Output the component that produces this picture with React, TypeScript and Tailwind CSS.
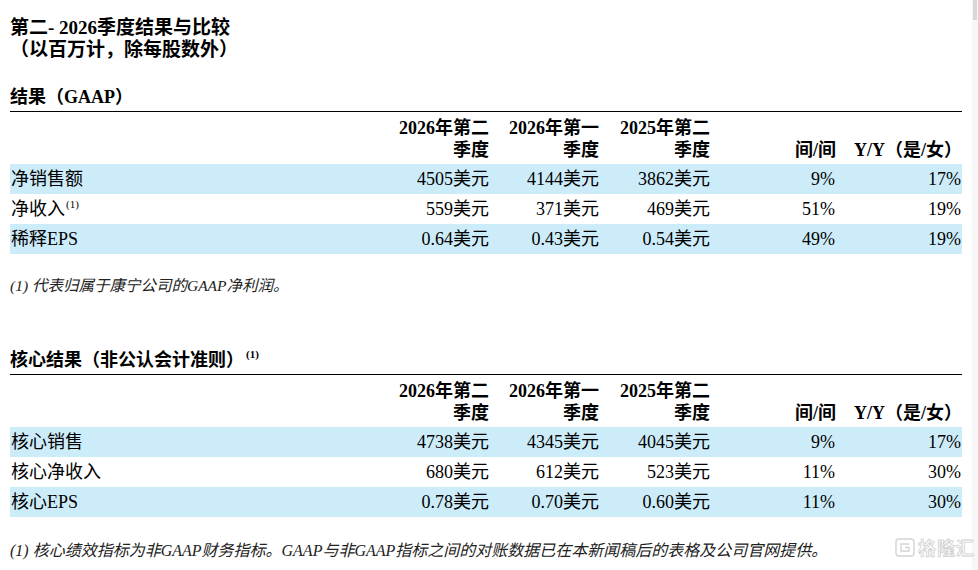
import React from 'react';

type Row = {
  label: string;
  sup?: string;
  values: string[];
};

const serif = "font-['Liberation_Serif','Noto_Sans_CJK_SC',serif]";

const gaapRows: Row[] = [
  { label: '净销售额', values: ['4505美元', '4144美元', '3862美元', '9%', '17%'] },
  { label: '净收入', sup: '(1)', values: ['559美元', '371美元', '469美元', '51%', '19%'] },
  { label: '稀释EPS', values: ['0.64美元', '0.43美元', '0.54美元', '49%', '19%'] },
];

const coreRows: Row[] = [
  { label: '核心销售', values: ['4738美元', '4345美元', '4045美元', '9%', '17%'] },
  { label: '核心净收入', values: ['680美元', '612美元', '523美元', '11%', '30%'] },
  { label: '核心EPS', values: ['0.78美元', '0.70美元', '0.60美元', '11%', '30%'] },
];

// 列宽：标签 | 三个季度 | 间/间 | Y/Y
const cols = 'grid grid-cols-[1fr_110px_110px_111px_124px_126px]';

const HeaderRow = () => (
  <div className={`${cols} h-[52px] items-end pb-[3px] font-bold text-[18px] leading-[22px]`}>
    <div />
    <div className="text-right pr-[2px]">2026年第二<br />季度</div>
    <div className="text-right pr-[2px]">2026年第一<br />季度</div>
    <div className="text-right pr-[2px]">2025年第二<br />季度</div>
    <div className="text-right">间/间</div>
    <div className="text-right">Y/Y（是/女）</div>
  </div>
);

const DataRows = ({ rows }: { rows: Row[] }) => (
  <div>
    {rows.map((row, i) => (
      <div
        key={row.label}
        className={`${cols} h-[30px] items-center text-[18px] ${i % 2 === 0 ? 'bg-[#cdecfa]' : 'bg-white'}`}
      >
        <div className="pl-[1px]">
          {row.label}
          {row.sup && <sup className="text-[11px] ml-[1px] relative -top-[7px]">{row.sup}</sup>}
        </div>
        {row.values.map((v, j) => (
          <div key={j} className={`text-right ${j < 3 ? 'pr-[2px]' : 'pr-[1px]'}`}>{v}</div>
        ))}
      </div>
    ))}
  </div>
);

const Watermark = () => (
  <div className="absolute right-[3px] bottom-[9px] flex items-center gap-[3px]">
    <svg width="20" height="19" viewBox="0 0 20 19" fill="none" stroke="#d4d4d4" strokeWidth="1.4">
      <rect x="1" y="1" width="18" height="17" rx="3" />
      <path d="M14 6H6v7h8V9.5h-4" />
    </svg>
    <span className="text-[18px] font-['Noto_Sans_CJK_SC',sans-serif] font-bold tracking-[1px] text-white [-webkit-text-stroke:0.8px_#d0d0d0]">
      格隆汇
    </span>
  </div>
);

export default function App() {
  return (
    <div className={`relative w-[978px] h-[570px] bg-white text-black overflow-hidden ${serif}`}>
      <div className="absolute right-0 top-0 h-full w-[6px] bg-[#f7f7f7]">
        <div className="h-[20px] w-[4px] ml-[1px] bg-[#d8d8d8]" />
      </div>

      <div className="w-[952px] ml-[10px] pt-[17px]">
        <div className="font-bold text-[19px] leading-[22px]">
          <div>第二- 2026季度结果与比较</div>
          <div>（以百万计，除每股数外）</div>
        </div>

        <div className="mt-[25px] font-bold text-[18px] leading-[22px] pb-[3px] border-b-[1.5px] border-black">
          结果（GAAP）
        </div>
        <HeaderRow />
        <DataRows rows={gaapRows} />

        <div className="mt-[22px] italic text-[15.5px] leading-[20px] text-[#222]">
          (1) 代表归属于康宁公司的GAAP净利润。
        </div>

        <div className="mt-[53px] font-bold text-[18px] leading-[22px] pb-[3px] border-b-[1.5px] border-black">
          核心结果（非公认会计准则）
          <sup className="text-[11px] ml-[2px] relative -top-[8px]">(1)</sup>
        </div>
        <HeaderRow />
        <DataRows rows={coreRows} />

        <div className="mt-[24px] italic text-[16px] leading-[20px] text-[#222] whitespace-nowrap">
          (1) 核心绩效指标为非GAAP财务指标。GAAP与非GAAP指标之间的对账数据已在本新闻稿后的表格及公司官网提供。
        </div>
      </div>

      <Watermark />
    </div>
  );
}
